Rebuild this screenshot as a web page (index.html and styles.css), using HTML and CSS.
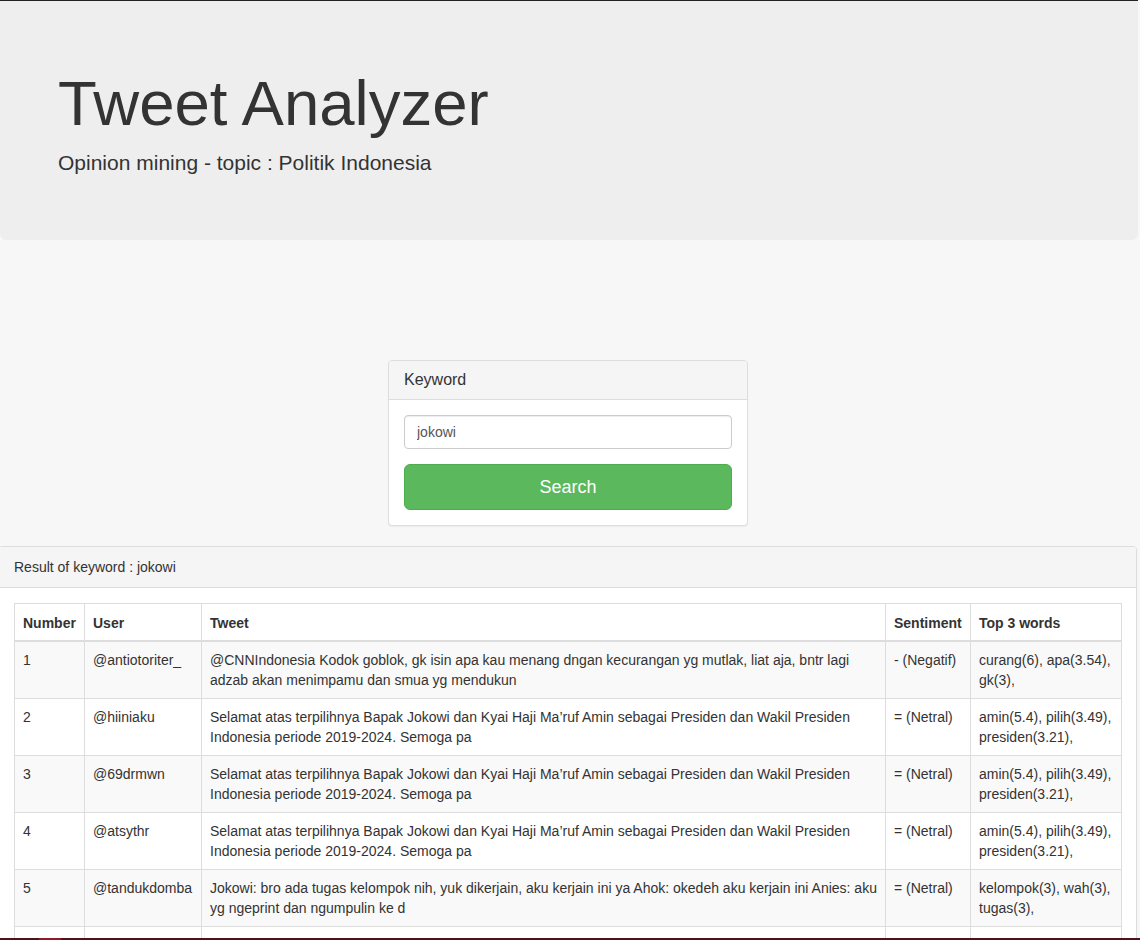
FILE: index.html
```html
<!DOCTYPE html>
<html lang="id">
<head>
  <meta charset="UTF-8" />
  <meta name="viewport" content="width=device-width, initial-scale=1.0" />
  <title>Tweet Analyzer</title>
  <link rel="stylesheet" href="styles.css">
</head>
<body>
  <div class="jumbotron">
    <h1>Tweet Analyzer</h1>
    <p>Opinion mining - topic : Politik Indonesia</p>
  </div>

  <div class="search-wrap">
    <div class="panel search-panel">
      <div class="panel-heading">Keyword</div>
      <form class="panel-body search-form">
        <input type="text" class="form-control" name="keyword" value="jokowi">
        <button type="submit" class="btn btn-success">Search</button>
      </form>
    </div>
  </div>

  <div class="panel result-panel">
    <div class="panel-heading small">Result of keyword : jokowi</div>
    <div class="panel-body">
      <table class="table">
        <colgroup>
          <col class="c-num">
          <col class="c-user">
          <col class="c-tweet">
          <col class="c-sent">
          <col class="c-top">
        </colgroup>
        <thead>
          <tr>
            <th>Number</th>
            <th>User</th>
            <th>Tweet</th>
            <th>Sentiment</th>
            <th>Top 3 words</th>
          </tr>
        </thead>
        <tbody>
          <tr>
            <td>1</td>
            <td>@antiotoriter_</td>
            <td>@CNNIndonesia Kodok goblok, gk isin apa kau menang dngan kecurangan yg mutlak, liat aja, bntr lagi adzab akan menimpamu dan smua yg mendukun</td>
            <td>- (Negatif)</td>
            <td>curang(6), apa(3.54), gk(3),</td>
          </tr>
          <tr>
            <td>2</td>
            <td>@hiiniaku</td>
            <td>Selamat atas terpilihnya Bapak Jokowi dan Kyai Haji Ma’ruf Amin sebagai Presiden dan Wakil Presiden Indonesia periode 2019-2024. Semoga pa</td>
            <td>= (Netral)</td>
            <td>amin(5.4), pilih(3.49), presiden(3.21),</td>
          </tr>
          <tr>
            <td>3</td>
            <td>@69drmwn</td>
            <td>Selamat atas terpilihnya Bapak Jokowi dan Kyai Haji Ma’ruf Amin sebagai Presiden dan Wakil Presiden Indonesia periode 2019-2024. Semoga pa</td>
            <td>= (Netral)</td>
            <td>amin(5.4), pilih(3.49), presiden(3.21),</td>
          </tr>
          <tr>
            <td>4</td>
            <td>@atsythr</td>
            <td>Selamat atas terpilihnya Bapak Jokowi dan Kyai Haji Ma’ruf Amin sebagai Presiden dan Wakil Presiden Indonesia periode 2019-2024. Semoga pa</td>
            <td>= (Netral)</td>
            <td>amin(5.4), pilih(3.49), presiden(3.21),</td>
          </tr>
          <tr>
            <td>5</td>
            <td>@tandukdomba</td>
            <td>Jokowi: bro ada tugas kelompok nih, yuk dikerjain, aku kerjain ini ya Ahok: okedeh aku kerjain ini Anies: aku yg ngeprint dan ngumpulin ke d</td>
            <td>= (Netral)</td>
            <td>kelompok(3), wah(3), tugas(3),</td>
          </tr>
          <tr>
            <td>6</td>
            <td>@kabarpolitik</td>
            <td>Presiden Jokowi hari ini meresmikan proyek jalan tol baru di Sumatera, warga menyambut dengan antusias</td>
            <td>+ (Positif)</td>
            <td>jalan(3), tol(2.8), warga(2.1),</td>
          </tr>
        </tbody>
      </table>
    </div>
  </div>

  <div class="taskbar"><span class="taskbar-active"></span></div>
</body>
</html>
```

FILE: styles.css
```css
* { margin: 0; padding: 0; box-sizing: border-box; }
body {
  font-family: "Liberation Sans", Arial, Helvetica, sans-serif;
  font-size: 14px;
  line-height: 20px;
  color: #333;
  background-color: #f7f7f7;
  width: 1140px;
  overflow: hidden;
}

/* header */
.jumbotron {
  width: 1138px;
  background-color: #eee;
  border-top: 1px solid #222;
  border-radius: 0 0 6px 6px;
  padding: 48px 58px 47px;
}

.jumbotron h1 {
  font-size: 63.5px;
  font-weight: 500;
  line-height: 69px;
  margin: 20px 0 10px;
}

.jumbotron p {
  font-size: 21px;
  line-height: 30px;
  margin-bottom: 15px;
}

/* panels */
.panel {
  background-color: #fff;
  border: 1px solid #ddd;
  border-radius: 4px;
  box-shadow: 0 1px 1px rgba(0,0,0,0.05);
}

.panel-heading {
  background-color: #f5f5f5;
  border-bottom: 1px solid #ddd;
  border-radius: 3px 3px 0 0;
  padding: 10px 15px;
  font-size: 16px;
  line-height: 1.1;
}

.panel-heading.small {
  font-size: 14px;
  line-height: 20px;
}

.panel-body {
  padding: 15px;
}

/* keyword form */
.search-wrap {
  width: 1136px;
  display: flex;
  justify-content: center;
  padding-top: 120px;
  margin-bottom: 20px;
}

.search-panel {
  width: 360px;
}

.search-form {
  display: flex;
  flex-direction: column;
  gap: 15px;
}

.form-control {
  height: 34px;
  padding: 6px 12px;
  font-family: inherit;
  font-size: 14px;
  color: #555;
  border: 1px solid #ccc;
  border-radius: 4px;
  box-shadow: inset 0 1px 1px rgba(0,0,0,0.075);
}

.btn {
  padding: 10px 16px;
  font-family: inherit;
  font-size: 18px;
  line-height: 24px;
  border-radius: 6px;
  cursor: pointer;
}

.btn-success {
  color: #fff;
  background-color: #5cb85c;
  border: 1px solid #4cae4c;
}

.btn-success:hover {
  background-color: #449d44;
}

/* result table */
.result-panel {
  width: 1139px;
  margin-left: -2px;
}

.table {
  width: 1107px;
  table-layout: fixed;
  border-collapse: collapse;
  margin-bottom: 20px;
}

.c-num { width: 70px; }
.c-user { width: 117px; }
.c-tweet { width: 684px; }
.c-sent { width: 85px; }
.c-top { width: 151px; }

.table th,
.table td {
  border: 1px solid #ddd;
  padding: 8px;
  text-align: left;
  vertical-align: top;
}

.table th {
  padding: 9px 8px 7px;
  font-weight: bold;
  vertical-align: bottom;
  border-bottom-width: 2px;
}

.table tbody tr:nth-child(odd) {
  background-color: #f9f9f9;
}

/* window bar along the bottom edge */
.taskbar {
  position: fixed;
  left: 0;
  bottom: 0;
  width: 100%;
  height: 2px;
  background-color: #4a141a;
}

.taskbar-active {
  display: block;
  margin-left: 39px;
  width: 22px;
  height: 2px;
  background-color: #8e1b27;
}
```
